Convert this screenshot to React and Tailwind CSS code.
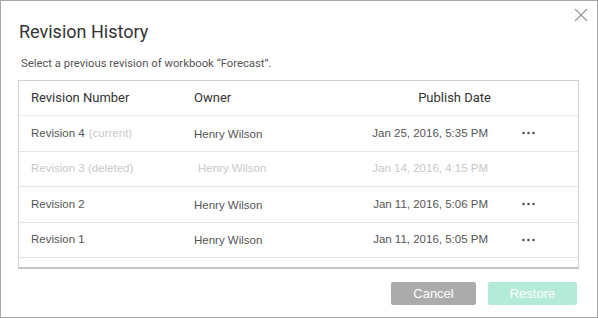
import { X } from 'lucide-react'

const rows = [
  { rev: 'Revision 4', tag: '(current)', owner: 'Henry Wilson', date: 'Jan 25, 2016, 5:35 PM', menu: true },
  { rev: 'Revision 3 (deleted)', owner: 'Henry Wilson', date: 'Jan 14, 2016, 4:15 PM', deleted: true },
  { rev: 'Revision 2', owner: 'Henry Wilson', date: 'Jan 11, 2016, 5:06 PM', menu: true },
  { rev: 'Revision 1', owner: 'Henry Wilson', date: 'Jan 11, 2016, 5:05 PM', menu: true },
]

function Dots() {
  return (
    <svg width="13" height="4" viewBox="0 0 13 4" className="text-[#555]">
      <circle cx="1.5" cy="2" r="1.3" fill="currentColor" />
      <circle cx="6.5" cy="2" r="1.3" fill="currentColor" />
      <circle cx="11.5" cy="2" r="1.3" fill="currentColor" />
    </svg>
  )
}

export default function App() {
  return (
    <div className="w-[598px] h-[318px] bg-white border border-[#a6a6a6] relative font-['Liberation_Sans',Arial,sans-serif]">
      {/* Close */}
      <button className="absolute top-[3px] right-[5px] text-[#9a9a9a]">
        <X className="w-[22px] h-[22px]" strokeWidth={1.4} />
      </button>

      {/* Header */}
      <h1 className="pl-[18px] pt-[19px] text-[18px] leading-[24px] text-[#333] font-['Roboto',sans-serif]">
        Revision History
      </h1>
      <p className="pl-[20px] mt-[13px] text-[11.3px] leading-[14px] text-[#555] font-['Roboto',sans-serif]">
        Select a previous revision of workbook “Forecast”.
      </p>

      {/* Table */}
      <div className="ml-[17px] mt-[9px] w-[561px] h-[189px] border border-[#cfcfcf] border-b-2 border-b-[#c4c4c4] overflow-hidden">
        <div className="flex items-center h-[35px] border-b border-[#ebebeb] text-[13px] text-[#333] font-['Roboto',sans-serif]">
          <div className="w-[175px] pl-[12px]">Revision Number</div>
          <div className="w-[120px]">Owner</div>
          <div className="w-[177px] text-right">Publish Date</div>
        </div>
        {rows.map((r) => (
          <div
            key={r.rev}
            className={`flex items-center h-[35.5px] border-b border-[#e6e6e6] text-[11.5px] ${
              r.deleted ? 'text-[#c8c8c8]' : 'text-[#555]'
            }`}
          >
            <div className="w-[175px] pl-[12px]">
              {r.rev}
              {r.tag && <span className="ml-[4px] text-[#c9c9c9]">{r.tag}</span>}
            </div>
            <div className={`w-[120px] ${r.deleted ? 'pl-[4px]' : 'pt-[2px]'}`}>{r.owner}</div>
            <div className="w-[174px] text-right">{r.date}</div>
            <div className="w-[68px] flex justify-center pl-[12px]">{r.menu && <Dots />}</div>
          </div>
        ))}
      </div>

      {/* Actions */}
      <div className="flex justify-end gap-[12px] pr-[20px] mt-[13px]">
        <button className="w-[85px] h-[23px] rounded-[2px] bg-[#ababab] text-white text-[13px]">
          Cancel
        </button>
        <button className="w-[89px] h-[23px] rounded-[2px] bg-[#b3ebd8] text-white text-[13px]">
          Restore
        </button>
      </div>
    </div>
  )
}
